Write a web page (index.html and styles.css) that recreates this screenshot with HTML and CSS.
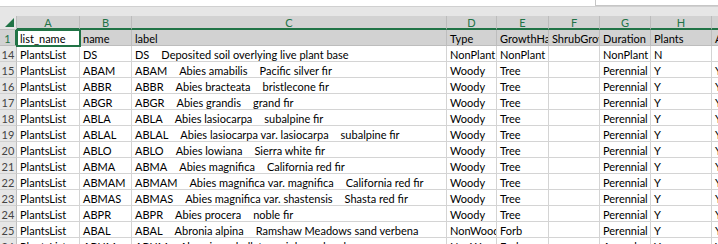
FILE: index.html
```html
<!DOCTYPE html>
<html>
<head>
<meta charset="utf-8">
<link rel="stylesheet" href="styles.css">
</head>
<body>
<div class="top">
  <div class="topbar"></div>
  <div class="fbox"></div>
</div>
<div class="sheet">
  <div class="row hdr">
    <div class="c rh corner"><span class="tri"></span></div>
    <div class="c ch">A</div><div class="c ch">B</div><div class="c ch">C</div><div class="c ch">D</div><div class="c ch">E</div><div class="c ch">F</div><div class="c ch">G</div><div class="c ch">H</div><div class="c ch">I</div>
  </div>
  <div class="row sel">
    <div class="c rh rsel">1</div>
    <div class="c active">list_name</div><div class="c">name</div><div class="c">label</div><div class="c">Type</div><div class="c">GrowthHabit</div><div class="c">ShrubGrowth</div><div class="c">Duration</div><div class="c">Plants</div><div class="c">Annual</div>
  </div>
  <div class="row"><div class="c rh">14</div><div class="c">PlantsList</div><div class="c">DS</div><div class="c">DS<span class="t">Deposited soil overlying live plant base</span></div><div class="c">NonPlant</div><div class="c">NonPlant</div><div class="c"></div><div class="c">NonPlant</div><div class="c">N</div><div class="c"></div></div>
  <div class="row"><div class="c rh">15</div><div class="c">PlantsList</div><div class="c">ABAM</div><div class="c">ABAM<span class="t">Abies amabilis</span><span class="t">Pacific silver fir</span></div><div class="c">Woody</div><div class="c">Tree</div><div class="c"></div><div class="c">Perennial</div><div class="c">Y</div><div class="c">Y</div></div>
  <div class="row"><div class="c rh">16</div><div class="c">PlantsList</div><div class="c">ABBR</div><div class="c">ABBR<span class="t">Abies bracteata</span><span class="t">bristlecone fir</span></div><div class="c">Woody</div><div class="c">Tree</div><div class="c"></div><div class="c">Perennial</div><div class="c">Y</div><div class="c">Y</div></div>
  <div class="row"><div class="c rh">17</div><div class="c">PlantsList</div><div class="c">ABGR</div><div class="c">ABGR<span class="t">Abies grandis</span><span class="t">grand fir</span></div><div class="c">Woody</div><div class="c">Tree</div><div class="c"></div><div class="c">Perennial</div><div class="c">Y</div><div class="c">Y</div></div>
  <div class="row"><div class="c rh">18</div><div class="c">PlantsList</div><div class="c">ABLA</div><div class="c">ABLA<span class="t">Abies lasiocarpa</span><span class="t">subalpine fir</span></div><div class="c">Woody</div><div class="c">Tree</div><div class="c"></div><div class="c">Perennial</div><div class="c">Y</div><div class="c">Y</div></div>
  <div class="row"><div class="c rh">19</div><div class="c">PlantsList</div><div class="c">ABLAL</div><div class="c">ABLAL<span class="t">Abies lasiocarpa var. lasiocarpa</span><span class="t">subalpine fir</span></div><div class="c">Woody</div><div class="c">Tree</div><div class="c"></div><div class="c">Perennial</div><div class="c">Y</div><div class="c">Y</div></div>
  <div class="row"><div class="c rh">20</div><div class="c">PlantsList</div><div class="c">ABLO</div><div class="c">ABLO<span class="t">Abies lowiana</span><span class="t">Sierra white fir</span></div><div class="c">Woody</div><div class="c">Tree</div><div class="c"></div><div class="c">Perennial</div><div class="c">Y</div><div class="c">Y</div></div>
  <div class="row"><div class="c rh">21</div><div class="c">PlantsList</div><div class="c">ABMA</div><div class="c">ABMA<span class="t">Abies magnifica</span><span class="t">California red fir</span></div><div class="c">Woody</div><div class="c">Tree</div><div class="c"></div><div class="c">Perennial</div><div class="c">Y</div><div class="c">Y</div></div>
  <div class="row"><div class="c rh">22</div><div class="c">PlantsList</div><div class="c">ABMAM</div><div class="c">ABMAM<span class="t">Abies magnifica var. magnifica</span><span class="t">California red fir</span></div><div class="c">Woody</div><div class="c">Tree</div><div class="c"></div><div class="c">Perennial</div><div class="c">Y</div><div class="c">Y</div></div>
  <div class="row"><div class="c rh">23</div><div class="c">PlantsList</div><div class="c">ABMAS</div><div class="c">ABMAS<span class="t">Abies magnifica var. shastensis</span><span class="t">Shasta red fir</span></div><div class="c">Woody</div><div class="c">Tree</div><div class="c"></div><div class="c">Perennial</div><div class="c">Y</div><div class="c">Y</div></div>
  <div class="row"><div class="c rh">24</div><div class="c">PlantsList</div><div class="c">ABPR</div><div class="c">ABPR<span class="t">Abies procera</span><span class="t">noble fir</span></div><div class="c">Woody</div><div class="c">Tree</div><div class="c"></div><div class="c">Perennial</div><div class="c">Y</div><div class="c">Y</div></div>
  <div class="row"><div class="c rh">25</div><div class="c">PlantsList</div><div class="c">ABAL</div><div class="c">ABAL<span class="t">Abronia alpina</span><span class="t">Ramshaw Meadows sand verbena</span></div><div class="c">NonWoody</div><div class="c">Forb</div><div class="c"></div><div class="c">Perennial</div><div class="c">Y</div><div class="c">Y</div></div>
  <div class="row"><div class="c rh">26</div><div class="c">PlantsList</div><div class="c">ABUM</div><div class="c">ABUM<span class="t">Abronia umbellata</span><span class="t">pink sand verbena</span></div><div class="c">NonWoody</div><div class="c">Forb</div><div class="c"></div><div class="c">Annual</div><div class="c">Y</div><div class="c">Y</div></div>
</div>
</body>
</html>
```
FILE: styles.css
```css
html, body {
  margin: 0;
  padding: 0;
  background: #ffffff;
  overflow: hidden;
}
body {
  font-family: Lato, "Liberation Sans", sans-serif;
  font-size: 11px;
  color: #000;
}
.top {
  position: relative;
  height: 16px;
  background: #e6e6e6;
}
.topbar {
  height: 6px;
  background: #ffffff;
  border-bottom: 1px solid #d0d0d0;
}
.fbox {
  position: absolute;
  top: 0;
  right: 0;
  width: 122px;
  height: 5px;
  background: #fff;
  border-left: 1px solid #c6c6c6;
  border-bottom: 1px solid #c6c6c6;
}
.row {
  display: grid;
  grid-template-columns: 17px 63px 52px 315px 50px 52px 51px 51px 61px 40px;
  height: 16px;
}
.c {
  box-sizing: border-box;
  border-right: 1px solid #d4d4d4;
  border-bottom: 1px solid #d4d4d4;
  padding: 1px 1px 0 3px;
  white-space: nowrap;
  overflow: hidden;
  line-height: 15px;
  height: 16px;
}
.t { margin-left: 12px; }
.rh {
  background: #e6e6e6;
  color: #444;
  text-align: center;
  padding: 1px 0 0;
  border-right: 1px solid #bfbfbf;
  border-bottom: 1px solid #d0d0d0;
}
.hdr { height: 14px; }
.hdr .c {
  height: 14px;
  line-height: 13px;
  padding: 0;
  background: #d2d2d2;
  color: #217346;
  text-align: center;
  border-right: 1px solid #bcbcbc;
  border-bottom: 2px solid #217346;
}
.hdr .corner {
  background: #e6e6e6;
  border-bottom: 1px solid #bfbfbf;
  position: relative;
}
.tri {
  position: absolute;
  right: 2px;
  bottom: 2px;
  width: 0;
  height: 0;
  border-left: 9px solid transparent;
  border-bottom: 9px solid #217346;
}
.sel .c { background: #d2d2d2; border-right-color: #bdbdbd; border-bottom-color: #bdbdbd; }
.sel .rsel {
  background: #d2d2d2;
  color: #217346;
  border-right: 2px solid #217346;
}
.sel .active {
  background: #fff;
  outline: 2px solid #217346;
  outline-offset: -1px;
  position: relative;
}
```
